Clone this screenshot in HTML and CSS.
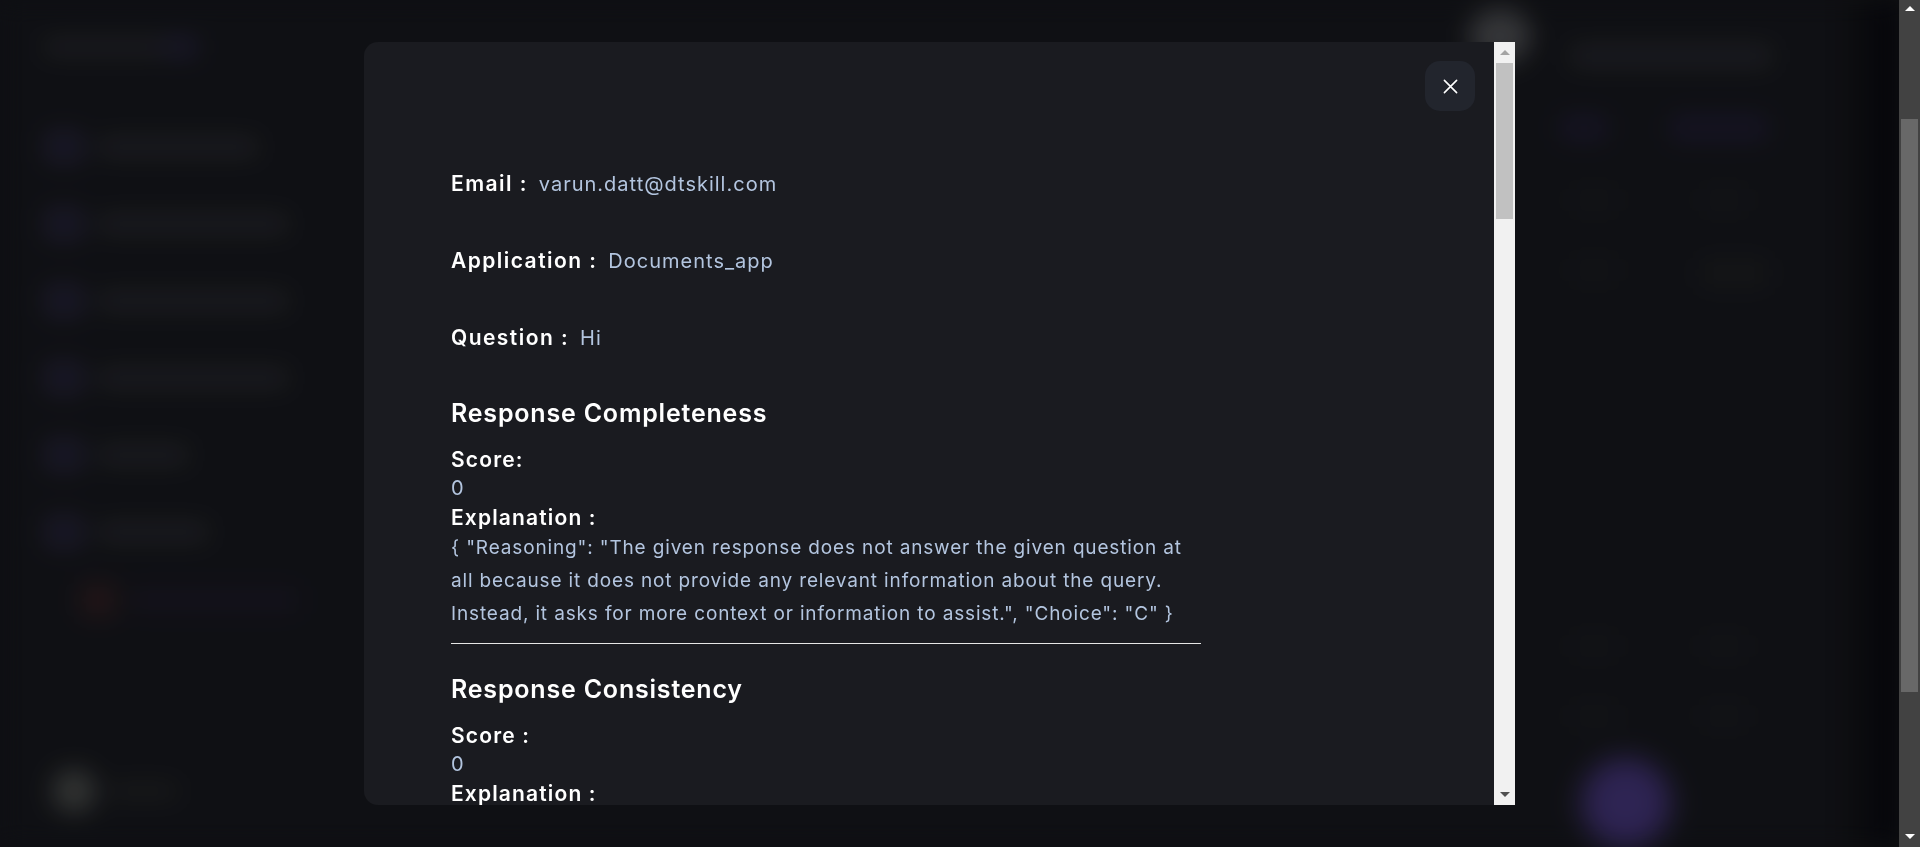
FILE: index.html
```html
<!DOCTYPE html>
<html lang="en">
<head>
<meta charset="utf-8">
<title>Evaluation details</title>
<link rel="stylesheet" href="styles.css">
</head>
<body>
<div class="page">
  <div class="viewport">
    <div class="app">
      <aside class="sidebar">
        <div class="logo"><span class="logo-bar"></span><span class="logo-dot"></span></div>
        <nav class="nav">
          <div class="nav-item"><span class="nav-ic"></span><span class="nav-tx w1"></span></div>
          <div class="nav-item"><span class="nav-ic"></span><span class="nav-tx w2"></span></div>
          <div class="nav-item"><span class="nav-ic"></span><span class="nav-tx w2"></span></div>
          <div class="nav-item"><span class="nav-ic"></span><span class="nav-tx w2"></span></div>
          <div class="nav-item"><span class="nav-ic"></span><span class="nav-tx w3"></span></div>
          <div class="nav-item"><span class="nav-ic"></span><span class="nav-tx w4"></span></div>
          <div class="nav-item active"><span class="nav-ic red"></span><span class="nav-tx purple"></span></div>
        </nav>
        <div class="user"><span class="avatar"></span><span class="user-tx"></span></div>
      </aside>
      <main class="main">
        <div class="content-area"></div>
        <div class="right-panel">
          <div class="topbar"><span class="top-avatar"></span><span class="top-tx"></span></div>
          <div class="chips"><span class="chip c1"></span><span class="chip c2"></span></div>
          <div class="stat-row"><span class="stat"></span><span class="stat"></span></div>
          <div class="stat-row"><span class="stat"></span><span class="stat big"></span></div>
          <div class="spacer"></div>
          <div class="stat-row"><span class="stat"></span><span class="stat"></span></div>
          <div class="stat-row"><span class="stat"></span><span class="stat"></span></div>
          <div class="fab-row"><span class="fab"></span></div>
        </div>
        <div class="edge-shade"></div>
      </main>
    </div>

    <div class="overlay">
      <div class="modal">
        <div class="modal-body">
          <button class="close-btn" aria-label="Close">
            <svg width="15" height="15" viewBox="0 0 16 16"><path d="M1.5 1.5 L14.5 14.5 M14.5 1.5 L1.5 14.5" stroke="#ffffff" stroke-width="1.7" stroke-linecap="round" fill="none"/></svg>
          </button>
          <div class="details">
            <div class="field"><span class="label">Email :</span><span class="value">varun.datt@dtskill.com</span></div>
            <div class="field"><span class="label">Application :</span><span class="value">Documents_app</span></div>
            <div class="field"><span class="label">Question :</span><span class="value">Hi</span></div>

            <section class="metric">
              <h2 class="metric-title">Response Completeness</h2>
              <div class="sub-label">Score:</div>
              <div class="sub-value">0</div>
              <div class="sub-label">Explanation :</div>
              <p class="explanation">{ "Reasoning": "The given response does not answer the given question at all because it does not provide any relevant information about the query. Instead, it asks for more context or information to assist.", "Choice": "C" }</p>
            </section>
            <hr class="divider">
            <section class="metric">
              <h2 class="metric-title">Response Consistency</h2>
              <div class="sub-label">Score :</div>
              <div class="sub-value">0</div>
              <div class="sub-label">Explanation :</div>
              <p class="explanation">{ "Reasoning": "The response is consistent with the context provided, but it does not address the question.", "Choice": "C" }</p>
            </section>
          </div>
        </div>
        <div class="modal-scroll">
          <span class="arrow up light"></span>
          <div class="modal-track"><span class="modal-thumb"></span></div>
          <span class="arrow down dark"></span>
        </div>
      </div>
    </div>
  </div>
  <div class="page-scroll">
    <span class="arrow up white"></span>
    <div class="page-track"><span class="page-thumb"></span></div>
    <span class="arrow down white"></span>
  </div>
</div>
</body>
</html>
```

FILE: styles.css
```css
* { box-sizing: border-box; }
html, body { margin: 0; padding: 0; height: 100%; }
body {
  background: #111216;
  font-family: "Inter", "Noto Sans", "DejaVu Sans", sans-serif;
  overflow: hidden;
}
.page { display: flex; width: 1920px; height: 847px; }
.viewport { position: relative; flex: 1; height: 847px; overflow: hidden; }

/* blurred background application */
.app {
  display: flex;
  height: 100%;
  filter: blur(12px);
  background: #121317;
}
.sidebar {
  width: 340px;
  display: flex;
  flex-direction: column;
  padding: 36px 0 0 44px;
}
.logo { display: flex; align-items: center; height: 22px; }
.logo-bar { width: 120px; height: 16px; background: #202126; border-radius: 6px; }
.logo-dot { width: 34px; height: 20px; background: #1d1b30; border-radius: 6px; }
.nav { display: flex; flex-direction: column; gap: 41px; margin-top: 71px; }
.nav-item { display: flex; align-items: center; gap: 14px; min-height: 36px; }
.nav-ic { width: 40px; height: 34px; background: #1d1b2c; border-radius: 8px; }
.nav-ic.red { background: #26181c; margin-left: 36px; width: 36px; }
.nav-tx { height: 18px; background: #202126; border-radius: 6px; }
.nav-tx.w1 { width: 160px; }
.nav-tx.w2 { width: 190px; }
.nav-tx.w3 { width: 90px; }
.nav-tx.w4 { width: 110px; }
.nav-tx.purple { width: 170px; height: 28px; background: #16141f; }
.nav-item.active { margin-top: -9px; }
.user { display: flex; align-items: center; gap: 12px; margin-top: auto; margin-bottom: 34px; }
.avatar { width: 44px; height: 44px; border-radius: 50%; background: #383a39; margin-left: 8px; }
.user-tx { width: 70px; height: 14px; background: #1d1e21; border-radius: 6px; }

.main { position: relative; flex: 1; display: flex; }
.content-area { flex: 1; }
.right-panel {
  width: 400px;
  display: flex;
  flex-direction: column;
  padding: 8px 0 0 60px;
}
.right-panel > * { flex-shrink: 0; }
.topbar { display: flex; align-items: flex-start; gap: 40px; height: 64px; margin-left: -90px; }
.top-avatar { width: 62px; height: 56px; border-radius: 50%; background: #3c3d40; }
.top-tx { width: 200px; height: 20px; background: #202126; border-radius: 6px; margin-top: 38px; }
.chips { display: flex; gap: 60px; margin-top: 42px; }
.chip { height: 28px; background: #181627; border-radius: 8px; }
.chip.c1 { width: 50px; }
.chip.c2 { width: 100px; }
.stat-row { display: flex; gap: 80px; margin-top: 46px; padding-left: 10px; }
.stat { width: 50px; height: 24px; background: #151619; border-radius: 8px; }
.stat.big { width: 70px; height: 30px; background: #17181b; }
.spacer { height: 300px; }
.fab-row { padding-left: 22px; margin-top: 30px; }
.fab { display: block; width: 90px; height: 90px; border-radius: 50%; background: #35295f; filter: blur(8px); }
.edge-shade {
  position: absolute; top: 0; right: 0; width: 70px; height: 100%;
  background: linear-gradient(90deg, rgba(4,4,8,0), #06060a);
}

/* overlay + modal */
.overlay {
  position: absolute;
  inset: 0;
  display: flex;
  align-items: center;
  padding-left: 364px;
  background: rgba(0, 0, 0, 0.12);
}
.modal {
  width: 1151px;
  height: 763px;
  display: flex;
  background: #1a1b20;
  border-radius: 14px 0 0 14px;
  overflow: hidden;
}
.modal-body {
  position: relative;
  flex: 1;
  overflow: hidden;
  padding: 127px 0 0 87px;
}
.close-btn {
  position: absolute;
  top: 19px;
  right: 19px;
  width: 50px;
  height: 50px;
  border: none;
  border-radius: 15px;
  background: #22252d;
  display: flex;
  align-items: center;
  justify-content: center;
  padding: 0;
}
.details { width: 750px; }
.field {
  display: flex;
  align-items: baseline;
  gap: 11px;
  height: 30px;
  line-height: 30px;
  margin-bottom: 47px;
}
.label { color: #ffffff; font-size: 21px; font-weight: 600; letter-spacing: 1.45px; }
.value { color: #b3c5df; font-size: 20px; font-weight: 400; letter-spacing: 1px; }
.field:nth-of-type(3) { margin-bottom: 44px; }
.metric-title {
  margin: 0 0 16px;
  color: #ffffff;
  font-size: 25px;
  line-height: 32px;
  font-weight: 600;
  letter-spacing: 0.8px;
}
.sub-label { color: #ffffff; font-size: 21px; font-weight: 600; line-height: 29px; letter-spacing: 1.15px; }
.sub-value { color: #b3c5df; font-size: 20px; line-height: 29px; }
.explanation {
  margin: -1px 0 0;
  color: #b3c5df;
  font-size: 19px;
  line-height: 33px;
  letter-spacing: 0.85px;
}
.divider {
  margin: 13px 0 29px;
  border: none;
  border-top: 1px solid #e6e6e6;
  height: 0;
}

/* modal scrollbar */
.modal-scroll {
  width: 21px;
  background: #f1f1f1;
  display: flex;
  flex-direction: column;
  align-items: center;
}
.modal-track { flex: 1; width: 100%; padding: 0 2px; }
.modal-thumb { display: block; height: 156px; background: #c1c1c1; }
.arrow { width: 0; height: 0; border-left: 5px solid transparent; border-right: 5px solid transparent; }
.arrow.up { border-bottom: 5px solid #a3a3a3; margin: 8px 0 8px; }
.arrow.down { border-top: 5px solid #505050; margin: 8px 0 8px; }
.arrow.light { border-bottom-color: #a3a3a3; }
.arrow.dark { border-top-color: #505050; }

/* page scrollbar */
.page-scroll {
  width: 21px;
  height: 847px;
  background: #424242;
  display: flex;
  flex-direction: column;
  align-items: center;
}
.page-track { flex: 1; width: 100%; padding: 108px 2px 0; }
.page-thumb { display: block; height: 573px; background: #686868; }
.arrow.white.up { border-bottom-color: #ffffff; margin: 6px 0 0; }
.arrow.white.down { border-top-color: #ffffff; margin: 0 0 8px; }
```
